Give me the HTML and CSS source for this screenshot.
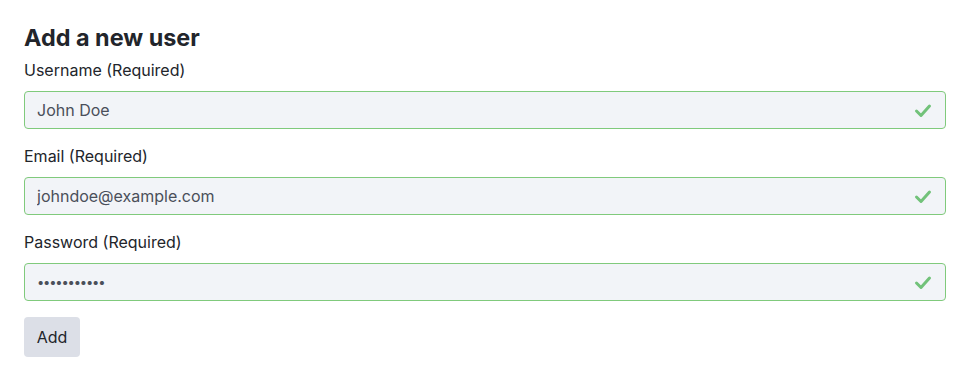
FILE: index.html
```html
<!DOCTYPE html>
<html lang="en">
<head>
    <meta charset="UTF-8">
    <meta name="viewport" content="width=device-width, initial-scale=1.0">
    <title>Add a new user</title>
    <link rel="stylesheet" href="styles.css">
</head>
<body>
    <form class="userform">
        <h2>Add a new user</h2>
        <div class="field">
            <label for="username">Username (Required)</label>
            <div class="control">
                <input id="username" type="text" value="John Doe">
                <svg class="check" viewBox="0 0 18 15"><path d="M2.5 8l4.5 4.5 8.5-9.5"/></svg>
            </div>
        </div>
        <div class="field">
            <label for="email">Email (Required)</label>
            <div class="control">
                <input id="email" type="email" value="johndoe@example.com">
                <svg class="check" viewBox="0 0 18 15"><path d="M2.5 8l4.5 4.5 8.5-9.5"/></svg>
            </div>
        </div>
        <div class="field">
            <label for="password">Password (Required)</label>
            <div class="control">
                <input id="password" class="pw" type="password" value="secret12345">
                <svg class="check" viewBox="0 0 18 15"><path d="M2.5 8l4.5 4.5 8.5-9.5"/></svg>
            </div>
        </div>
        <button type="button" class="btn">Add</button>
    </form>
</body>
</html>
```

FILE: styles.css
```css
*{
    margin: 0;
    padding: 0;
    box-sizing: border-box;
}
body{
    font-family: Inter, "Noto Sans", sans-serif;
    color: #22252b;
    background-color: #fff;
}
.userform{
    padding: 25px 22px 0 24px;
}
.userform h2{
    font-size: 23.4px;
    font-weight: 700;
    line-height: 26px;
    margin-bottom: 8px;
}
.field{
    margin-bottom: 16px;
}
.field label{
    display: block;
    font-size: 16px;
    line-height: 22px;
    margin-bottom: 10px;
}
.control{
    position: relative;
}
.control input{
    display: block;
    width: 100%;
    height: 38px;
    padding: 0 40px 0 12px;
    font-family: inherit;
    font-size: 16px;
    color: #4a4f5a;
    background-color: #f2f4f8;
    border: 1px solid #80ca7c;
    border-radius: 4px;
    outline: none;
}
.control input.pw{
    font-size: 13px;
    letter-spacing: -1.2px;
}
.control .check{
    position: absolute;
    right: 14px;
    top: 12px;
    width: 18px;
    height: 15px;
    fill: none;
    stroke: #72c27a;
    stroke-width: 3;
    stroke-linecap: round;
    stroke-linejoin: round;
}
.btn{
    display: block;
    width: 56px;
    height: 40px;
    font-family: inherit;
    font-size: 16px;
    color: #22252b;
    background-color: #dcdfe7;
    border: none;
    border-radius: 4px;
    cursor: pointer;
}
```
